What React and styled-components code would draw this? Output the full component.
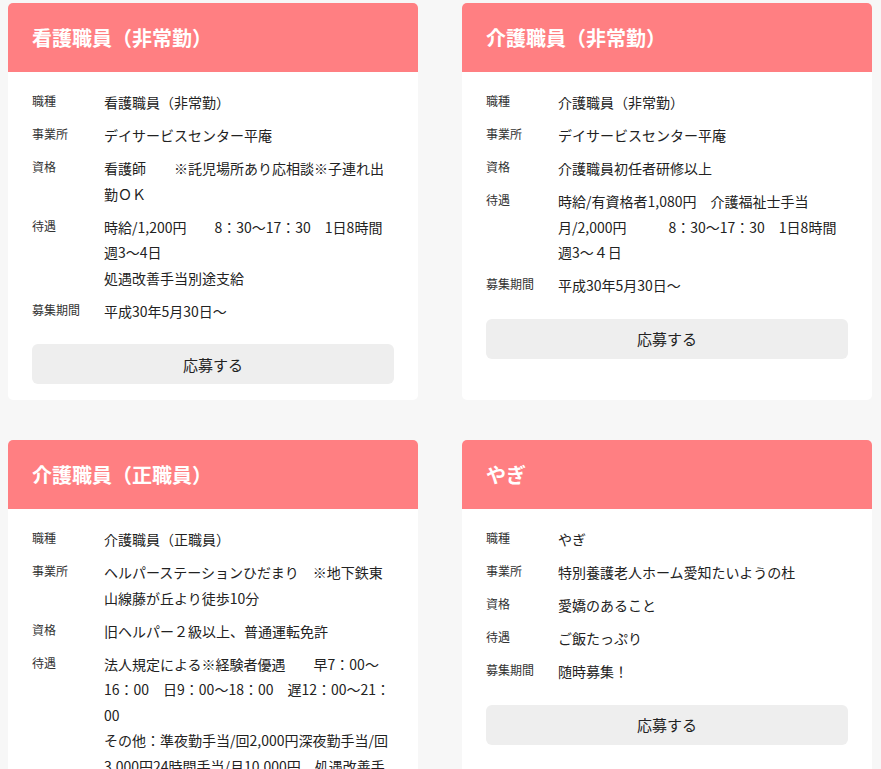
import React from "react";
import styled, { createGlobalStyle } from "styled-components";

const GlobalStyle = createGlobalStyle`
  html { scrollbar-width: none; }
  html::-webkit-scrollbar, body::-webkit-scrollbar { display: none; }
  body {
    margin: 0;
    background: #f7f7f7;
    font-family: "Noto Sans CJK JP", "Noto Sans", sans-serif;
    color: #333;
  }
`;

const Grid = styled.div`
  display: grid;
  grid-template-columns: 410px 410px;
  column-gap: 44px;
  row-gap: 40px;
  padding: 3px 8px 40px;
`;

const Card = styled.section`
  background: #fff;
  border-radius: 5px;
  overflow: hidden;
  display: flex;
  flex-direction: column;
`;

const Header = styled.h2`
  margin: 0;
  height: 69px;
  display: flex;
  align-items: center;
  padding: 0 24px;
  background: #ff7f82;
  color: #fff;
  font-size: 20px;
  font-weight: 700;
  line-height: 1;
`;

const Body = styled.div`
  padding: 18px 24px 16px;
`;

const List = styled.dl`
  margin: 0;
  display: flex;
  flex-direction: column;
  gap: 7.5px;
`;

const Row = styled.div`
  display: flex;
  align-items: flex-start;
`;

const Label = styled.dt`
  flex: 0 0 72px;
  font-size: 12px;
  line-height: 22px;
  color: #333;
`;

const Value = styled.dd`
  margin: 0;
  flex: 1;
  font-size: 14px;
  line-height: 25.5px;
  color: #222;
  white-space: pre-wrap;
`;

const Button = styled.button`
  margin-top: 20px;
  width: 100%;
  height: 40px;
  border: none;
  border-radius: 6px;
  background: #eeeeee;
  color: #222;
  font-family: inherit;
  font-size: 15px;
  cursor: pointer;
`;

const jobs = [
  {
    title: "看護職員（非常勤）",
    rows: [
      ["職種", "看護職員（非常勤）"],
      ["事業所", "デイサービスセンター平庵"],
      ["資格", "看護師　　※託児場所あり応相談※子連れ出勤ＯＫ"],
      ["待遇", "時給/1,200円　　8：30〜17：30　1日8時間\n週3〜4日\n処遇改善手当別途支給"],
      ["募集期間", "平成30年5月30日〜"],
    ],
  },
  {
    title: "介護職員（非常勤）",
    rows: [
      ["職種", "介護職員（非常勤）"],
      ["事業所", "デイサービスセンター平庵"],
      ["資格", "介護職員初任者研修以上"],
      ["待遇", "時給/有資格者1,080円　介護福祉士手当\n月/2,000円　　　8：30〜17：30　1日8時間\n週3〜４日"],
      ["募集期間", "平成30年5月30日〜"],
    ],
  },
  {
    title: "介護職員（正職員）",
    rows: [
      ["職種", "介護職員（正職員）"],
      ["事業所", "ヘルパーステーションひだまり　※地下鉄東山線藤が丘より徒歩10分"],
      ["資格", "旧ヘルパー２級以上、普通運転免許"],
      ["待遇", "法人規定による※経験者優遇　　早7：00〜\n16：00　日9：00〜18：00　遅12：00〜21：\n00\nその他：準夜勤手当/回2,000円深夜勤手当/回3,000円24時間手当/月10,000円　処遇改善手当別途支給"],
      ["募集期間", "平成30年6月1日〜"],
    ],
  },
  {
    title: "やぎ",
    rows: [
      ["職種", "やぎ"],
      ["事業所", "特別養護老人ホーム愛知たいようの杜"],
      ["資格", "愛嬌のあること"],
      ["待遇", "ご飯たっぷり"],
      ["募集期間", "随時募集！"],
    ],
  },
];

export default function App() {
  return (
    <>
      <GlobalStyle />
      <Grid>
        {jobs.map((job) => (
          <Card key={job.title}>
            <Header>{job.title}</Header>
            <Body>
              <List>
                {job.rows.map(([k, v]) => (
                  <Row key={k}>
                    <Label>{k}</Label>
                    <Value>{v}</Value>
                  </Row>
                ))}
              </List>
              <Button type="button">応募する</Button>
            </Body>
          </Card>
        ))}
      </Grid>
    </>
  );
}
